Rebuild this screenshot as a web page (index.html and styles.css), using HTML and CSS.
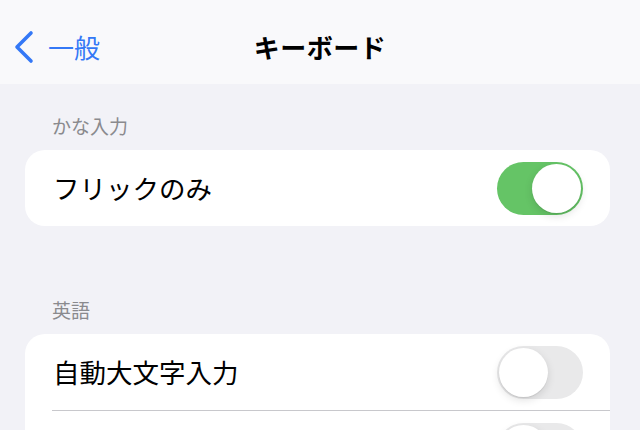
FILE: index.html
```html
<!DOCTYPE html>
<html lang="ja">
<head>
<meta charset="utf-8">
<link rel="stylesheet" href="styles.css">
</head>
<body>
<header class="nav">
  <div class="back">
    <svg class="chev" width="22" height="34" viewBox="0 0 22 34">
      <polyline points="18,3 4,17 18,31" fill="none" stroke="#3478f6" stroke-width="3.6" stroke-linecap="round" stroke-linejoin="round"/>
    </svg>
    <span class="back-label">一般</span>
  </div>
  <h1 class="title">キーボード</h1>
  <div class="spacer"></div>
</header>

<section class="section first">
  <div class="section-header">かな入力</div>
  <div class="card">
    <div class="row">
      <span class="row-label">フリックのみ</span>
      <span class="toggle on"><span class="knob"></span></span>
    </div>
  </div>
</section>

<section class="section second">
  <div class="section-header">英語</div>
  <div class="card">
    <div class="row">
      <span class="row-label">自動大文字入力</span>
      <span class="toggle"><span class="knob"></span></span>
    </div>
    <div class="sep"></div>
    <div class="row">
      <span class="row-label"></span>
      <span class="toggle"><span class="knob"></span></span>
    </div>
  </div>
</section>
</body>
</html>
```

FILE: styles.css
```css
html, body {
  margin: 0;
  padding: 0;
}
body {
  width: 640px;
  height: 430px;
  overflow: hidden;
  background: #f2f2f7;
  font-family: "Noto Sans CJK JP", "Noto Sans", sans-serif;
  color: #000;
}
.nav {
  height: 84px;
  background: #f9f9fb;
  display: grid;
  grid-template-columns: 1fr auto 1fr;
  align-items: center;
  box-sizing: border-box;
  padding-top: 10px;
}
.back {
  display: flex;
  align-items: center;
  padding-left: 13px;
  gap: 13px;
}
.chev {
  display: block;
}
.back-label {
  color: #3478f6;
  font-size: 26px;
  line-height: 34px;
}
.title {
  margin: 0;
  font-size: 26px;
  font-weight: 700;
  line-height: 34px;
  letter-spacing: 0.5px;
}
.section {
  margin-left: 25px;
  margin-right: 30px;
}
.section.first {
  padding-top: 28px;
}
.section.second {
  padding-top: 70px;
}
.section-header {
  color: #8a8a8e;
  font-size: 19px;
  line-height: 28px;
  padding-left: 27px;
  margin-bottom: 10px;
}
.card {
  background: #fff;
  border-radius: 20px;
  overflow: hidden;
}
.row {
  height: 76px;
  display: flex;
  align-items: center;
  justify-content: space-between;
  padding: 0 27px 0 28px;
}
.row-label {
  font-size: 26.5px;
  line-height: 36px;
}
.sep {
  height: 1px;
  background: #c8c8cc;
  margin-left: 27px;
}
.toggle {
  position: relative;
  width: 86px;
  height: 53px;
  border-radius: 27px;
  background: #e9e9ea;
  flex: none;
}
.toggle.on {
  background: #65c466;
}
.knob {
  position: absolute;
  top: 2px;
  left: 2px;
  width: 49px;
  height: 49px;
  border-radius: 50%;
  background: #fff;
  box-shadow: 0 3px 8px rgba(0,0,0,0.12), 0 1px 1px rgba(0,0,0,0.08);
}
.toggle.on .knob {
  left: 35px;
}
```
